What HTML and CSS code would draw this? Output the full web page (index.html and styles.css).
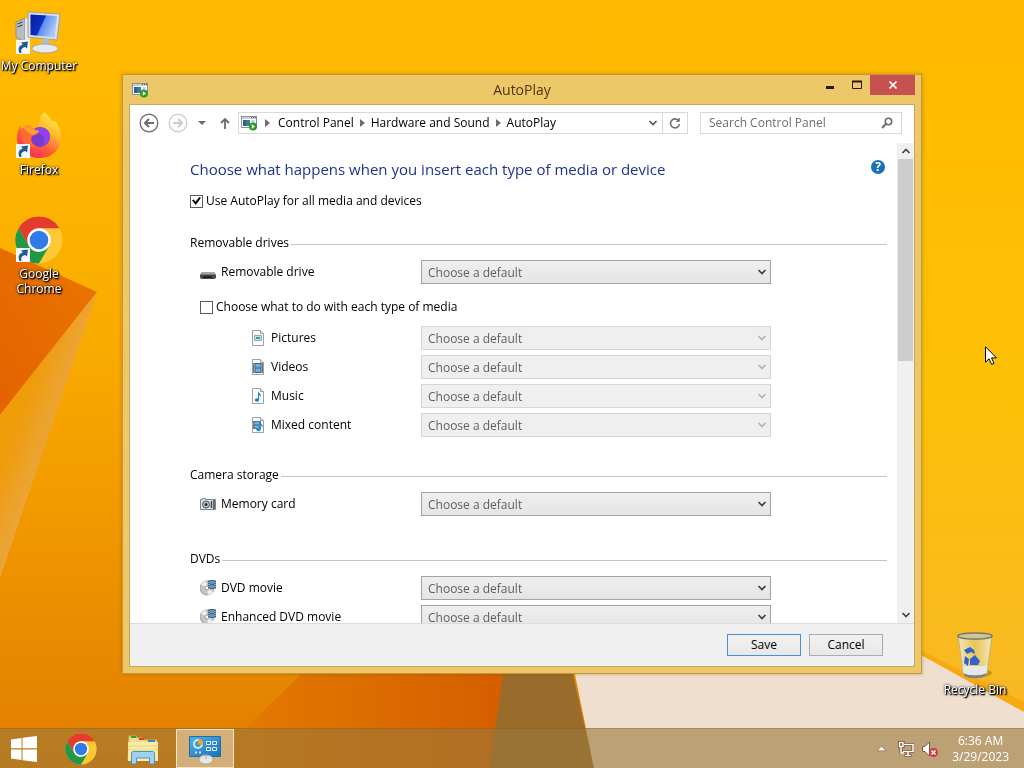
FILE: index.html
```html
<!doctype html>
<html lang="en">

<head>
  <meta charset="utf-8">
  <meta name="viewport" content="width=device-width, initial-scale=1">
  <link rel="stylesheet" href="styles.css">
  <title>AutoPlay</title>
</head>

<body>
  <!-- shared icons -->
  <svg class="sprite" aria-hidden="true">
    <defs>
      <linearGradient id="g-screen" x1="0" y1="0" x2="1" y2=".4">
        <stop offset="0" stop-color="#0a1a9c" />
        <stop offset=".5" stop-color="#0b2fc4" />
        <stop offset=".55" stop-color="#5d8ef0" />
        <stop offset="1" stop-color="#a8c8fa" />
      </linearGradient>
      <linearGradient id="g-fox" x1=".8" y1="0" x2=".2" y2="1">
        <stop offset="0" stop-color="#fff04a" />
        <stop offset=".35" stop-color="#ffb72e" />
        <stop offset=".65" stop-color="#ff5a36" />
        <stop offset="1" stop-color="#f0256b" />
      </linearGradient>
      <linearGradient id="g-bin" x1="0" y1="0" x2="1" y2="0">
        <stop offset="0" stop-color="#f3eed0" stop-opacity=".9" />
        <stop offset=".5" stop-color="#e2c765" stop-opacity=".8" />
        <stop offset="1" stop-color="#f4edd0" stop-opacity=".9" />
      </linearGradient>
      <linearGradient id="g-panel" x1="0" y1="0" x2="1" y2="1">
        <stop offset="0" stop-color="#56aee6" />
        <stop offset="1" stop-color="#1673ba" />
      </linearGradient>
    </defs>
    <symbol id="i-chevron" viewBox="0 0 10 8">
      <path d="M1.500 2 5 5.500 8.500 2" fill="none" stroke="currentColor" stroke-width="1.700" />
    </symbol>
    <symbol id="i-crumb" viewBox="0 0 5 8">
      <path d="M0 0 5 4 0 8z" fill="#6d6d6d" />
    </symbol>
    <symbol id="i-autoplay" viewBox="0 0 16 16">
      <rect x=".5" y="1.500" width="15" height="11" fill="#fff" stroke="#8a8f96" />
      <path d="M1 2h14v2H1z" fill="#c9cfd8" />
      <path d="M10 2.500h1M12 2.500h1M14 2.500h1" stroke="#555" />
      <rect x="2" y="5" width="7" height="6" fill="#3c7f86" />
      <path d="M2 5h3v6H2z" fill="#2f5f93" />
      <path d="M10.500 6h3M10.500 8h2" stroke="#7aa0d0" />
      <circle cx="12" cy="11.500" r="4" fill="#2c9c22" />
      <path d="M10.800 9.300 14 11.500l-3.200 2.200z" fill="#fff" />
    </symbol>
    <symbol id="i-page" viewBox="0 0 16 16">
      <path d="M2.500.500h8l3 3v12h-11z" fill="#fbfcfd" stroke="#9aa1a8" />
      <path d="M10.500.500v3h3" fill="#e4e8ec" stroke="#9aa1a8" />
    </symbol>
    <symbol id="i-film" viewBox="0 0 10 10">
      <path d="M0 0h10v10H0z" fill="#4d626e" />
      <path d="M2.500 1h5v3.500h-5zM2.500 5.500h5V9h-5z" fill="#6fb0e2" />
      <path d="M1.200.500v9M8.800.500v9" stroke="#fff" stroke-dasharray="1 1" />
    </symbol>
    <symbol id="i-dvd" viewBox="0 0 16 16">
      <circle cx="7" cy="8" r="7" fill="#c3c6c6" stroke="#9ea2a2" />
      <path d="M7 8 1 4.500A7 7 0 0 1 6 1zM7 8l6 4a7 7 0 0 1-5 3z" fill="#eef0ee" />
      <circle cx="7" cy="8" r="2" fill="#fff" stroke="#9a9a9a" />
      <path d="M8 0h8v9H8z" fill="#4a6a70" />
      <path d="M10 1h4v3h-4zM10 5h4v3h-4z" fill="#5d8fdf" />
      <path d="M9 0v9M15 0v9" stroke="#c9e4c0" stroke-dasharray="1 1" />
    </symbol>
    <symbol id="i-chrome" viewBox="0 0 48 48">
      <circle cx="24" cy="24" r="23.500" fill="#fcc934" />
      <path d="M24 .500a23.500 23.500 0 0 1 20.400 11.700H24L13.800 29.900 3.600 12.200A23.500 23.500 0 0 1 24 .500z" fill="#e33b2e" />
      <path d="M3.600 12.200 13.800 29.900A11.800 11.800 0 0 0 24 35.800L34.200 29.900 24 47.500A23.500 23.500 0 0 1 3.600 12.200z" fill="#219749" />
      <circle cx="24" cy="24" r="11.700" fill="#fff" />
      <circle cx="24" cy="24" r="9.300" fill="#2f7be8" />
    </symbol>
    <symbol id="i-shortcut" viewBox="0 0 14 14">
      <path d="M0 0h14v14H0z" fill="#f6f8fa" />
      <path d="M3.500 13C1.500 9 3 5.500 6.800 4.600L5 2.500l7-1-1 7L9.300 6.900C6 7.400 4.500 9.500 5.500 13z" fill="#1f5a94" />
    </symbol>
  </svg>

  <main class="desktop">
    <svg class="wallpaper" viewBox="0 0 1024 768" preserveAspectRatio="none" aria-hidden="true">
      <defs>
        <linearGradient id="w-base" x1="0" y1="0" x2="0" y2="1">
          <stop offset="0" stop-color="#ffb900" />
          <stop offset=".12" stop-color="#ffb900" />
          <stop offset=".45" stop-color="#f9ab00" />
          <stop offset=".75" stop-color="#ee9200" />
          <stop offset="1" stop-color="#e17d00" />
        </linearGradient>
        <linearGradient id="w-right" x1="0" y1="0" x2="0" y2="1">
          <stop offset="0" stop-color="#ffb900" />
          <stop offset=".12" stop-color="#ffbb00" />
          <stop offset=".5" stop-color="#fdc106" />
          <stop offset="1" stop-color="#f7b62c" />
        </linearGradient>
        <linearGradient id="w-left" x1="1" y1="0" x2="0" y2="1">
          <stop offset="0" stop-color="#ea7600" />
          <stop offset="1" stop-color="#e46200" />
        </linearGradient>
        <linearGradient id="w-streak" gradientUnits="userSpaceOnUse" x1="10" y1="440" x2="44" y2="452">
          <stop offset="0" stop-color="#ee9c08" />
          <stop offset="1" stop-color="#eca43a" />
        </linearGradient>
        <linearGradient id="w-fold" x1="0" y1="0" x2="1" y2="0">
          <stop offset="0" stop-color="#e47e00" />
          <stop offset="1" stop-color="#d55e00" />
        </linearGradient>
      </defs>
      <path d="M0 0h1024v768H0z" fill="url(#w-base)" />
      <path d="M600 0h424v768H600z" fill="url(#w-right)" />
      <path d="M0 248 97 292 0 415z" fill="url(#w-left)" />
      <path d="M97 292 0 415v163z" fill="url(#w-streak)" />
      <path d="M305 670h200l-16 98H205z" fill="url(#w-fold)" />
      <path d="M504 670h68l22 98H489z" fill="#9a6c2c" />
      <path d="M900 640 1024 702v20L900 658z" fill="#f7aa10" />
      <path d="M571 655h350l103 57v56H594z" fill="#f0dfcf" />
    </svg>

    <div class="shortcuts">
      <a class="shortcut" href="#computer">
        <span class="shortcut-icon">
          <svg viewBox="0 0 48 48">
            <path d="M1 14l9-4v24l-9-5z" fill="#b8bcc0" stroke="#8c9094" />
            <path d="M10 10l5 1v23l-5 1z" fill="#e6e8ea" />
            <path d="M2.500 16l5-2M2.500 19l5-2" stroke="#333" />
            <path d="M13 4 45 6l-3 26-29-3z" fill="#dde0e4" stroke="#9aa0a8" />
            <path d="M15.500 6.500 42 8l-2.500 21.500-24-2.500z" fill="url(#g-screen)" />
            <path d="M27 31h7v7h-7z" fill="#b6bac0" />
            <ellipse cx="30" cy="40.500" rx="13" ry="4.500" fill="#e7e9ec" stroke="#a3a7ad" />
          </svg>
          <svg class="badge"><use href="#i-shortcut" /></svg>
        </span>
        My Computer
      </a>
      <a class="shortcut" href="#firefox">
        <span class="shortcut-icon">
          <svg viewBox="0 0 48 48">
            <path d="M29 0c4 3 7 6 8 10 1-1 2-1 3-1 4 5 6 10 6 16 0 12-9 21-21 21S2 38 2 26c0-5 1-9 4-13 0 2 0 3 1 4 3-4 6-5 9-4 1 1 2 3 3 4 4-2 5-5 6-9 0-3 2-6 4-8z" fill="url(#g-fox)" />
            <circle cx="25" cy="25" r="10" fill="#7a3bd0" />
            <path d="M16 22c2-6 8-8 13-6 4 1 6 5 6 8 0 5-4 9-8 10 3-4 3-8 0-11-3-2-7-2-11-1z" fill="#8f45e6" />
            <path d="M6 17c6-3 12 0 18 2-1 3-4 4-7 5-2 4 0 9 5 11-8 2-14-3-16-9z" fill="#ff6a30" />
            <path d="M8 15c6 0 11 3 16 4-1 2-3 3-6 4-4-1-7-4-10-8z" fill="#ff9f2c" />
          </svg>
          <svg class="badge"><use href="#i-shortcut" /></svg>
        </span>
        Firefox
      </a>
      <a class="shortcut" href="#chrome">
        <span class="shortcut-icon">
          <svg><use href="#i-chrome" /></svg>
          <svg class="badge"><use href="#i-shortcut" /></svg>
        </span>
        Google Chrome
      </a>
    </div>

    <a class="shortcut recycle-bin" href="#recycle-bin">
      <span class="shortcut-icon">
        <svg viewBox="0 0 40 48">
          <ellipse cx="26" cy="41" rx="11" ry="4" fill="#000" opacity=".2" />
          <path d="M3 3h34l-5 38c-1 5-23 5-24 0z" fill="url(#g-bin)" stroke="#b9b28c" />
          <path d="M7.500 34h25l-1 7c-3 4-20 4-23 0z" fill="#e8ecf0" opacity=".9" />
          <path d="M8.500 41c4 3 19 3 23 0l-1 3c-4 3-17 3-21 0z" fill="#7d828a" />
          <ellipse cx="20" cy="4" rx="17" ry="3" fill="#cfc88e" stroke="#777b74" stroke-width="1.500" />
          <path d="M9 18l6-3 4 3 1 4-4-2-4 2zM15 27l5-4 5 6-2 4-8 0zM10 24l4 3-1 7-4-3z" fill="#2f62cf" />
        </svg>
      </span>
      Recycle Bin
    </a>

    <section class="window" aria-labelledby="window-title">
      <header class="titlebar">
        <svg class="icon"><use href="#i-autoplay" /></svg>
        <h1 id="window-title">AutoPlay</h1>
        <div class="window-controls">
          <button type="button" aria-label="Minimize">
            <svg viewBox="0 0 12 12"><path d="M2 8.500h8" stroke="#2b1a05" stroke-width="3" /></svg>
          </button>
          <button type="button" aria-label="Maximize">
            <svg viewBox="0 0 12 12"><path d="M1.500 2.500h9v7h-9z" fill="none" stroke="#2b1a05" /><path d="M1 2.500h10" stroke="#2b1a05" stroke-width="2" /></svg>
          </button>
          <button type="button" class="close" aria-label="Close">
            <svg viewBox="0 0 12 12"><path d="M2.500 2.500l7 7M9.500 2.500l-7 7" stroke="#fff" stroke-width="1.700" /></svg>
          </button>
        </div>
      </header>

      <div class="client">
        <nav class="navbar">
          <button type="button" class="round" aria-label="Back">
            <svg viewBox="0 0 20 20"><circle cx="10" cy="10" r="8.800" fill="#fff" stroke="#757575" stroke-width="1.400" /><path d="M15 10H6.500M10 6l-4 4 4 4" fill="none" stroke="#6b6b6b" stroke-width="2" /></svg>
          </button>
          <button type="button" class="round" aria-label="Forward" disabled>
            <svg viewBox="0 0 20 20"><circle cx="10" cy="10" r="8.800" fill="#fff" stroke="#cfcfcf" stroke-width="1.400" /><path d="M5 10h8.500M10 6l4 4-4 4" fill="none" stroke="#cbcbcb" stroke-width="2" /></svg>
          </button>
          <button type="button" class="recent" aria-label="Recent locations">
            <svg viewBox="0 0 8 8"><path d="M0 2h8L4 6z" fill="#6d6d6d" /></svg>
          </button>
          <button type="button" class="up" aria-label="Up">
            <svg viewBox="0 0 12 12"><path d="M6 12V1.500M2 6l4-4 4 4" fill="none" stroke="#6b6b6b" stroke-width="1.800" /></svg>
          </button>
          <div class="address">
            <svg class="icon"><use href="#i-autoplay" /></svg>
            <svg class="crumb"><use href="#i-crumb" /></svg>
            <a href="#control-panel">Control Panel</a>
            <svg class="crumb"><use href="#i-crumb" /></svg>
            <a href="#hardware-and-sound">Hardware and Sound</a>
            <svg class="crumb"><use href="#i-crumb" /></svg>
            <a href="#autoplay">AutoPlay</a>
            <button type="button" class="history" aria-label="Previous locations">
              <svg class="chevron"><use href="#i-chevron" /></svg>
            </button>
            <button type="button" class="refresh" aria-label="Refresh">
              <svg viewBox="0 0 12 12"><path d="M9.500 3.500A4.500 4.500 0 1 0 10.500 7" fill="none" stroke="#6f6f6f" stroke-width="1.600" /><path d="M10.800.500v4.300H6.500z" fill="#6f6f6f" /></svg>
            </button>
          </div>
          <label class="search">
            <input type="search" placeholder="Search Control Panel" aria-label="Search Control Panel">
            <svg viewBox="0 0 12 12"><circle cx="7.500" cy="4.500" r="3.200" fill="none" stroke="#6b6b6b" stroke-width="1.600" /><path d="M5.200 6.800 1 11" stroke="#6b6b6b" stroke-width="2" /></svg>
          </label>
        </nav>

        <div class="viewport">
          <form class="settings" id="settings">
            <div class="heading">
              <h2>Choose what happens when you insert each type of media or device</h2>
              <a class="help" href="#help" aria-label="Help">?</a>
            </div>
            <label class="check"><input type="checkbox" checked>Use AutoPlay for all media and devices</label>

            <fieldset>
              <legend>Removable drives</legend>
              <div class="row">
                <label for="removable">
                  <svg class="icon" viewBox="0 0 16 16"><path d="M2 8h12l2 3v3l-2 1H2l-2-1v-3z" fill="#4a4a4a" /><path d="M2 8h12l1.500 2.500H.500z" fill="#a6a6a6" /><path d="M3 13h9" stroke="#222" stroke-width="2" /></svg>
                  Removable drive
                </label>
                <div class="combo">
                  <select id="removable"><option>Choose a default</option></select>
                  <svg class="chevron"><use href="#i-chevron" /></svg>
                </div>
              </div>
              <label class="check media-check"><input type="checkbox">Choose what to do with each type of media</label>
              <div class="media">
                <div class="row">
                  <label for="pictures">
                    <svg class="icon" viewBox="0 0 16 16"><use href="#i-page" /><path d="M4.500 5.500h7v5h-7z" fill="#c4dfee" stroke="#8ea9bb" /><path d="M6 7h4v2H6z" fill="#4d8fb5" /></svg>
                    Pictures
                  </label>
                  <div class="combo">
                    <select id="pictures" disabled><option>Choose a default</option></select>
                    <svg class="chevron"><use href="#i-chevron" /></svg>
                  </div>
                </div>
                <div class="row">
                  <label for="videos">
                    <svg class="icon" viewBox="0 0 16 16"><use href="#i-page" /><use href="#i-film" x="3" y="4" width="10" height="10" /></svg>
                    Videos
                  </label>
                  <div class="combo">
                    <select id="videos" disabled><option>Choose a default</option></select>
                    <svg class="chevron"><use href="#i-chevron" /></svg>
                  </div>
                </div>
                <div class="row">
                  <label for="music">
                    <svg class="icon" viewBox="0 0 16 16"><use href="#i-page" /><path d="M8 3c0 2 4 3 3 6-1-2-2-2-2-2v5H8z" fill="#1c7fc4" /><ellipse cx="7" cy="12" rx="2.200" ry="1.800" fill="#1c7fc4" /></svg>
                    Music
                  </label>
                  <div class="combo">
                    <select id="music" disabled><option>Choose a default</option></select>
                    <svg class="chevron"><use href="#i-chevron" /></svg>
                  </div>
                </div>
                <div class="row">
                  <label for="mixed">
                    <svg class="icon" viewBox="0 0 16 16"><use href="#i-page" /><use href="#i-film" x="3" y="4" width="8" height="8" /><path d="M9 4c0 2 5 3 3.500 7-1-3-2.500-3-2.500-3v5H9z" fill="#1c8fd4" /><ellipse cx="8.500" cy="12.500" rx="2.200" ry="1.800" fill="#1c8fd4" /></svg>
                    Mixed content
                  </label>
                  <div class="combo">
                    <select id="mixed" disabled><option>Choose a default</option></select>
                    <svg class="chevron"><use href="#i-chevron" /></svg>
                  </div>
                </div>
              </div>
            </fieldset>

            <fieldset>
              <legend>Camera storage</legend>
              <div class="row">
                <label for="memory">
                  <svg class="icon" viewBox="0 0 16 16"><path d="M.500 3.500h2v-1h3v1h10v10H.500z" fill="#dfe6ea" stroke="#7b868d" /><circle cx="6" cy="8.500" r="3.500" fill="#b9c8d2" stroke="#46545e" /><circle cx="6" cy="8.500" r="1.500" fill="#222f38" /><path d="M11.500 5v7M14 4v9" stroke="#3a434a" stroke-width="1.500" /></svg>
                  Memory card
                </label>
                <div class="combo">
                  <select id="memory"><option>Choose a default</option></select>
                  <svg class="chevron"><use href="#i-chevron" /></svg>
                </div>
              </div>
            </fieldset>

            <fieldset>
              <legend>DVDs</legend>
              <div class="row">
                <label for="dvd"><svg class="icon"><use href="#i-dvd" /></svg>DVD movie</label>
                <div class="combo">
                  <select id="dvd"><option>Choose a default</option></select>
                  <svg class="chevron"><use href="#i-chevron" /></svg>
                </div>
              </div>
              <div class="row">
                <label for="enhanced"><svg class="icon"><use href="#i-dvd" /></svg>Enhanced DVD movie</label>
                <div class="combo">
                  <select id="enhanced"><option>Choose a default</option></select>
                  <svg class="chevron"><use href="#i-chevron" /></svg>
                </div>
              </div>
            </fieldset>
          </form>

          <div class="scrollbar">
            <button type="button" class="scroll-up" aria-label="Scroll up"><svg class="chevron"><use href="#i-chevron" /></svg></button>
            <div class="track"><div class="thumb"></div></div>
            <button type="button" aria-label="Scroll down"><svg class="chevron"><use href="#i-chevron" /></svg></button>
          </div>
        </div>

        <footer class="actions">
          <button type="submit" form="settings" class="default">Save</button>
          <button type="button">Cancel</button>
        </footer>
      </div>
    </section>

    <svg class="cursor" viewBox="0 0 12 19" aria-hidden="true">
      <path d="M.500.800v15.400l3.600-3.400 2.500 5.600 2.400-1-2.500-5.500h5z" fill="#fff" stroke="#000" />
    </svg>
  </main>

  <footer class="taskbar">
    <button type="button" class="start" aria-label="Start">
      <svg viewBox="0 0 28 28"><path d="M1 4.500 11.500 3v10.300H1zM12.500 2.800 27 1v12.300H12.500zM1 14.500h10.500V25L1 23.500zM12.500 14.500H27V27l-14.500-1.800z" fill="#fff" /></svg>
    </button>
    <button type="button" aria-label="Google Chrome"><svg><use href="#i-chrome" /></svg></button>
    <button type="button" aria-label="File Explorer">
      <svg viewBox="0 0 32 32">
        <path d="M2 3h7l1 2h6l1 2h13v20H1z" fill="#f3df88" stroke="#cdb45b" />
        <path d="M4 3h5v2H4z" fill="#2f9e4f" /><path d="M12 5h5v2h-5z" fill="#d8433a" /><path d="M21 7h7v2h-7z" fill="#3b82cf" />
        <path d="M1 9h30v19H1z" fill="#f8eba6" />
        <path d="M1 13h30M1 17h30" stroke="#e9d47c" />
        <path d="M4.500 31V20.500q0-2 2-2h19q2 0 2 2V31h-5v-6h-13v6z" fill="#9fd2f0" stroke="#4c93c2" />
      </svg>
    </button>
    <button type="button" class="active" aria-label="AutoPlay">
      <svg viewBox="0 0 32 32">
        <path d="M.500 3.500h31v20H.500z" fill="url(#g-panel)" stroke="#1f6da8" />
        <circle cx="9" cy="11" r="5" fill="#d9ecf8" /><circle cx="9" cy="11" r="3" fill="#3f9ad6" />
        <path d="M9 11V6a5 5 0 0 1 4.800 6.200z" fill="#f3a12c" />
        <path d="M17.500 8.500h4v3h-4zM23.500 8.500h4v3h-4zM17.500 14.500h4v3h-4zM23.500 14.500h4v3h-4z" fill="#2b83c4" stroke="#e4f2fb" />
        <path d="M6 19.500h2M10 19.500h2" stroke="#cfe8f8" stroke-width="2" />
        <ellipse cx="17" cy="26.500" rx="7" ry="4.500" fill="#e6e6e6" stroke="#a8a8a8" />
        <path d="M17 22v4" stroke="#aaa" />
      </svg>
    </button>
    <div class="tray">
      <svg class="tray-arrow" viewBox="0 0 8 8"><path d="M0 6h8L4 2z" fill="#fff" stroke="#7b5640" stroke-width=".5" /></svg>
      <svg class="icon" viewBox="0 0 16 16">
        <path d="M5 3.500h10v7H5M10 11v3M6.500 14.500h7" fill="none" stroke="#6d4527" stroke-width="3" />
        <path d="M1 1.500h4v4H1zM3 6v7" fill="none" stroke="#6d4527" stroke-width="3" />
        <path d="M6 3.500h9v7H5M10 11v3M7 14.500h6" fill="none" stroke="#fff" stroke-width="1.500" />
        <path d="M1.500 1.500h3.500v4H1.500zM3 6v6h3" fill="none" stroke="#fff" stroke-width="1.500" />
      </svg>
      <svg class="icon" viewBox="0 0 16 16">
        <path d="M.500 5.500h2.500L7.500 1v14L3 10.500H.500z" fill="#fff" stroke="#7b5640" />
        <circle cx="11.500" cy="11.500" r="4.500" fill="#d13a36" />
        <path d="M9.500 9.500l4 4M13.500 9.500l-4 4" stroke="#fff" stroke-width="1.500" />
      </svg>
      <time datetime="2023-03-29T06:36">6:36 AM<br>3/29/2023</time>
    </div>
  </footer>
</body>

</html>
```
FILE: styles.css
```css
* {
  box-sizing: border-box;
}

body {
  display: flex;
  flex-direction: column;
  height: 100vh;
  margin: 0;
  overflow: hidden;
  color: #000;
  font-family: "Open Sans", "Noto Sans", sans-serif;
  font-size: 12px;
  line-height: 16px;
}

button,
input,
select {
  margin: 0;
  color: inherit;
  font: inherit;
}

button {
  display: flex;
  align-items: center;
  justify-content: center;
  padding: 0;
  border: none;
  background: none;
}

a {
  color: inherit;
  text-decoration: none;
}

h1,
h2 {
  margin: 0;
  font-weight: normal;
}

.sprite {
  position: absolute;
  width: 0;
  height: 0;
}

.icon {
  flex: none;
  width: 16px;
  height: 16px;
}

.chevron {
  width: 10px;
  height: 8px;
}

/* desktop */

.desktop {
  flex: 1;
  min-height: 0;
}

.wallpaper {
  position: fixed;
  top: 0;
  left: 0;
  width: 100vw;
  height: 100vh;
  z-index: -1;
}

.shortcuts {
  display: flex;
  flex-direction: column;
  gap: 24px;
  width: 78px;
  padding-top: 8px;
}

.shortcut {
  display: flex;
  flex-direction: column;
  align-items: center;
  gap: 2px;
  min-height: 80px;
  color: #fff;
  line-height: 15px;
  text-align: center;
  text-shadow: 1px 1px 1px #000, 1px 1px 2px #000, 0 0 3px #000;
}

.shortcut-icon {
  position: relative;
  width: 48px;
  height: 48px;
}

.shortcut-icon svg {
  width: 48px;
  height: 48px;
}

.shortcut-icon .badge {
  position: absolute;
  bottom: 2px;
  left: 1px;
  width: 14px;
  height: 14px;
}

.recycle-bin {
  position: absolute;
  right: 9px;
  bottom: 56px;
  width: 80px;
}

.cursor {
  position: absolute;
  top: 346px;
  left: 985px;
  width: 12px;
  height: 19px;
}

/* window */

.window {
  position: absolute;
  top: 74px;
  right: 102px;
  bottom: 94px;
  left: 122px;
  display: flex;
  flex-direction: column;
  padding: 0 6px 6px;
  border: 1px solid #c3983b;
  background: #edc868;
  box-shadow: 0 0 4px rgba(120, 70, 0, 0.4);
}

.titlebar {
  display: grid;
  grid-template-columns: 1fr auto 1fr;
  align-items: center;
  height: 29px;
}

.titlebar .icon {
  margin-left: 3px;
}

.titlebar h1 {
  color: #4f3611;
  font-size: 14px;
  line-height: 20px;
}

.window-controls {
  display: flex;
  align-self: start;
  justify-content: flex-end;
}

.window-controls button {
  width: 27px;
  height: 20px;
}

.window-controls svg {
  width: 12px;
  height: 12px;
}

.window-controls .close {
  width: 45px;
  background: #c75050;
}

.client {
  display: flex;
  flex: 1;
  flex-direction: column;
  min-height: 0;
  border: 1px solid #c9a65a;
  background: #fff;
}

.navbar {
  display: flex;
  align-items: center;
  height: 36px;
  margin-bottom: 2px;
  padding: 0 12px 0 9px;
}

.round,
.round svg {
  width: 20px;
  height: 20px;
}

.round {
  margin-right: 9px;
}

.recent {
  width: 10px;
}

.recent svg {
  width: 8px;
  height: 8px;
}

.up {
  margin: 0 7px 0 12px;
}

.up svg {
  width: 12px;
  height: 12px;
}

.address {
  display: flex;
  flex: 1;
  align-items: center;
  height: 22px;
  padding-left: 2px;
  border: 1px solid #d9d9d9;
  white-space: nowrap;
}

.crumb {
  flex: none;
  width: 5px;
  height: 8px;
  margin: 0 6px;
}

.address .icon + .crumb {
  margin: 0 8px;
}

.history {
  width: 18px;
  height: 20px;
  margin-left: auto;
  color: #555;
}

.refresh {
  width: 25px;
  height: 20px;
  border-left: 1px solid #d9d9d9;
}

.refresh svg {
  width: 12px;
  height: 12px;
}

.search {
  display: flex;
  align-items: center;
  width: 202px;
  height: 22px;
  margin-left: 12px;
  padding: 0 8px;
  border: 1px solid #d9d9d9;
}

.search input {
  flex: 1;
  min-width: 0;
  padding: 0;
  border: none;
  outline: none;
  background: none;
}

.search input::placeholder {
  color: #6d6d6d;
}

.search svg {
  width: 12px;
  height: 12px;
}

/* settings page */

.viewport {
  display: flex;
  flex: 1;
  min-height: 0;
}

.settings {
  flex: 1;
  min-width: 0;
  padding: 14px 10px 0 60px;
  overflow: hidden;
}

.heading {
  display: flex;
  align-items: center;
  justify-content: space-between;
  height: 24px;
}

.heading h2 {
  color: #1c3391;
  font-size: 15px;
  line-height: 24px;
  white-space: nowrap;
}

.help {
  width: 14px;
  height: 14px;
  margin: 0 2px 4px 0;
  border-radius: 50%;
  background: #1b70b8;
  color: #fff;
  font-weight: bold;
  line-height: 14px;
  text-align: center;
}

.check {
  display: flex;
  align-items: center;
  gap: 3px;
  height: 24px;
}

.check input {
  display: grid;
  place-items: center;
  width: 13px;
  height: 13px;
  border: 1px solid #5c5c5c;
  background: #fff;
  appearance: none;
}

.check input:checked::before {
  width: 9px;
  height: 8px;
  background: #000;
  clip-path: polygon(0 40%, 20% 30%, 38% 60%, 82% 0, 100% 10%, 42% 100%);
  content: "";
}

.heading + .check {
  margin: 8px 0 18px;
}

fieldset {
  min-width: 0;
  margin: 0 0 26px;
  padding: 0;
  border: none;
}

legend {
  display: flex;
  align-items: center;
  gap: 2px;
  width: 100%;
  height: 24px;
  margin-bottom: 5px;
  padding: 0;
}

legend::after {
  flex: 1;
  height: 1px;
  margin-top: 3px;
  background: #c4c4c4;
  content: "";
}

.row {
  display: grid;
  grid-template-columns: 231px minmax(0, 350px);
  align-items: center;
  margin-bottom: 5px;
}

.row label {
  display: flex;
  align-items: center;
  gap: 5px;
  padding-left: 10px;
}

.media-check {
  margin: 11px 0 7px 10px;
}

.media .row label {
  padding-left: 60px;
}

.media .row:last-child {
  margin-bottom: 0;
}

.combo {
  display: grid;
  align-items: center;
  color: #404040;
}

.combo select,
.combo .chevron {
  grid-area: 1 / 1;
}

.combo select {
  width: 100%;
  height: 24px;
  padding: 1px 6px 0;
  border: 1px solid #a3a3a3;
  border-radius: 0;
  background: linear-gradient(#efefef, #e4e4e4);
  color: #5f5f5f;
  appearance: none;
}

.combo select:disabled {
  border-color: #d6d6d6;
  background: #efefef;
  opacity: 1;
}

.combo .chevron {
  justify-self: end;
  margin-right: 4px;
  pointer-events: none;
}

.combo select:disabled + .chevron {
  color: #b3b3b3;
}

.scrollbar {
  display: flex;
  flex-direction: column;
  width: 17px;
  background: #f0f0f0;
  color: #444;
}

.scrollbar button {
  height: 16px;
}

.scroll-up svg {
  transform: rotate(180deg);
}

.track {
  flex: 1;
}

.thumb {
  width: 15px;
  height: 45%;
  margin: 0 auto;
  background: #cdcdcd;
}

.actions {
  display: flex;
  align-items: center;
  justify-content: flex-end;
  gap: 8px;
  height: 43px;
  padding-right: 31px;
  border-top: 1px solid #dcdcdc;
  background: #f0f0f0;
}

.actions button {
  width: 74px;
  height: 22px;
  border: 1px solid #acacac;
  background: linear-gradient(#f2f2f2, #e8e8e8);
}

.actions .default {
  border-color: #4a92cf;
}

/* taskbar */

.taskbar {
  display: flex;
  height: 40px;
  border-top: 1px solid rgba(110, 80, 40, 0.3);
  background: rgba(153, 120, 58, 0.6);
}

.taskbar button {
  width: 58px;
  margin: 0 2px;
}

.taskbar button svg {
  width: 32px;
  height: 32px;
}

.taskbar .start {
  width: 48px;
  margin: 0 2px 0 0;
}

.taskbar .start svg {
  width: 28px;
  height: 28px;
}

.taskbar .active {
  border: 1px solid #f6e3c4;
  background: rgba(240, 225, 205, 0.5);
}

.tray {
  display: flex;
  align-items: center;
  gap: 8px;
  margin-left: auto;
  padding-right: 15px;
  color: #fff;
}

.tray-arrow {
  width: 9px;
  height: 9px;
  margin-right: 4px;
}

.tray time {
  margin-left: 6px;
  text-align: center;
}
```
